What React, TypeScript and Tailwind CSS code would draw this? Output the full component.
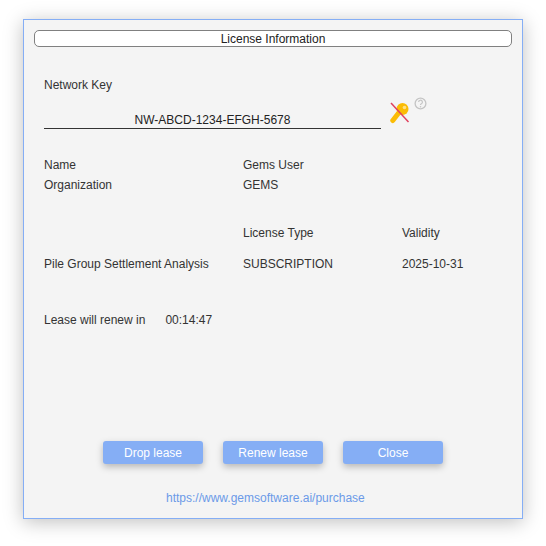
export default function App() {
  return (
    <div className="w-[546px] h-[546px] bg-white pl-[23px] pt-[19px] font-['Liberation_Sans',Arial,sans-serif] text-[12px] leading-[14px] text-[#333333]">
      <div className="w-[500px] h-[500px] flex flex-col border border-[#85aef5] bg-[#f4f4f4] shadow-[0_3px_18px_rgba(0,0,0,0.25)] pt-[10px]">
        <div className="ml-[10px] w-[478px] h-[17px] flex items-center justify-center rounded-[5px] border border-[#808080] bg-white text-[#222222]">
          License Information
        </div>

        <div className="pl-[20px] pt-[31px]">Network Key</div>

        <div className="pl-[20px] mt-[1px] flex items-start">
          <div className="w-[337px] h-[36px] flex items-end justify-center border-b border-[#333333] pb-[1px] text-[#222222]">
            NW-ABCD-1234-EFGH-5678
          </div>
          <svg width="22" height="22" viewBox="0 0 22 22" className="ml-[8px] mt-[9px]">
            <circle cx="13.5" cy="7" r="6" fill="#fbbc05" />
            <path d="M10 10.5 3.8 18.5" stroke="#fbbc05" strokeWidth="5" strokeLinecap="round" />
            <circle cx="15.5" cy="5.5" r="1.8" fill="#ffe082" />
            <path stroke="#e0405e" strokeWidth="1.5" d="M2 1 19.5 20" />
          </svg>
          <svg width="13" height="13" viewBox="0 0 13 13" className="ml-[3px] mt-[4px]">
            <circle cx="6.5" cy="6.5" r="5.4" fill="none" stroke="#c4c4c4" strokeWidth="1.3" />
            <path d="M4.6 5.1a1.9 1.9 0 1 1 2.8 1.7c-.6.3-.9.6-.9 1.3" fill="none" stroke="#c4c4c4" strokeWidth="1.2" />
            <circle cx="6.5" cy="9.7" r=".8" fill="#c4c4c4" />
          </svg>
        </div>

        <div className="pl-[20px] pt-[29px] grid grid-cols-[199px_1fr] gap-y-[6px]">
          <div>Name</div>
          <div>Gems User</div>
          <div>Organization</div>
          <div>GEMS</div>
        </div>

        <div className="pl-[20px] pt-[34px] grid grid-cols-[199px_159px_1fr] gap-y-[17px]">
          <div></div>
          <div>License Type</div>
          <div>Validity</div>
          <div>Pile Group Settlement Analysis</div>
          <div>SUBSCRIPTION</div>
          <div>2025-10-31</div>
        </div>

        <div className="pl-[20px] pt-[42px] flex gap-[20px]">
          <span>Lease will renew in</span>
          <span>00:14:47</span>
        </div>

        <div className="mt-[114px] flex justify-center gap-[20px]">
          <button className="w-[100px] h-[23px] rounded-[3px] bg-[#85aef5] text-white shadow-[0_3px_7px_rgba(0,0,0,0.25)]">Drop lease</button>
          <button className="w-[100px] h-[23px] rounded-[3px] bg-[#85aef5] text-white shadow-[0_3px_7px_rgba(0,0,0,0.25)]">Renew lease</button>
          <button className="w-[100px] h-[23px] rounded-[3px] bg-[#85aef5] text-white shadow-[0_3px_7px_rgba(0,0,0,0.25)]">Close</button>
        </div>

        <div className="mt-[27px] pl-[142px] text-[#6b9ae8]">https://www.gemsoftware.ai/purchase</div>
      </div>
    </div>
  )
}
